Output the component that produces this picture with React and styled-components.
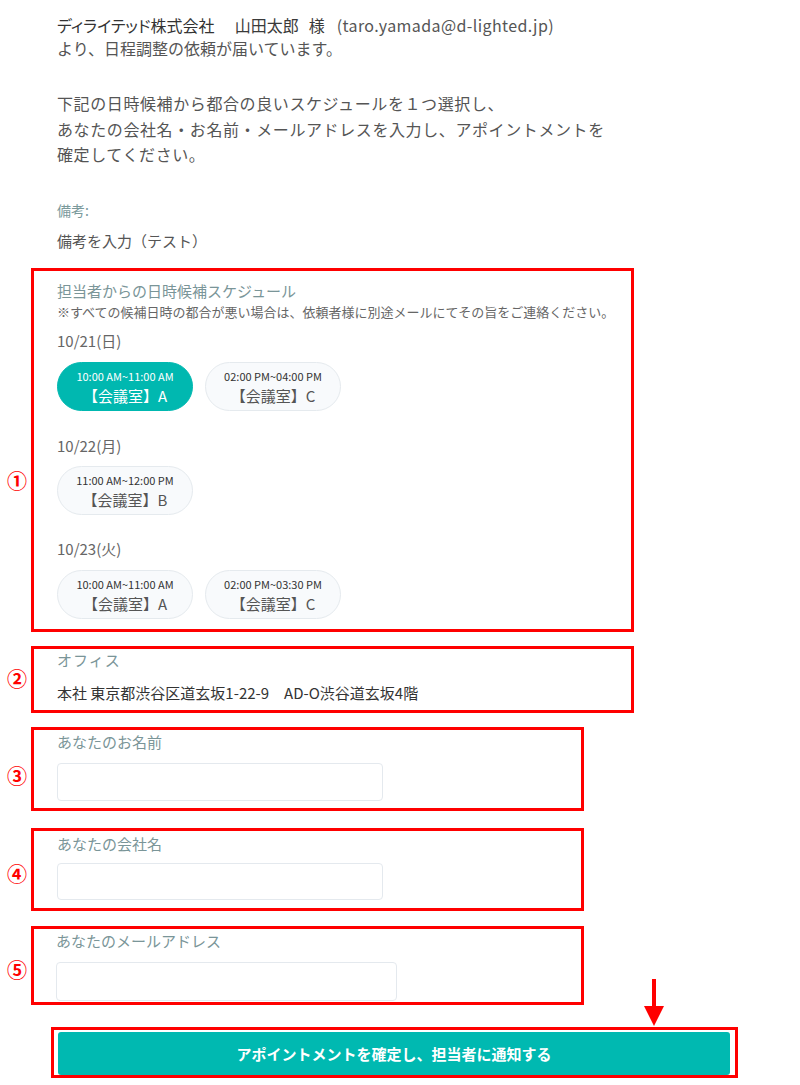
import React from "react";
import styled, { createGlobalStyle } from "styled-components";

const GlobalStyle = createGlobalStyle`
  html, body { margin: 0; padding: 0; background: #fff; }
  body { font-family: "Noto Sans CJK JP", "Noto Sans", sans-serif; color: #555; }
  * { box-sizing: border-box; }
`;

const Page = styled.div`
  width: 800px;
  padding: 14px 0 0 31px;
`;

const Intro = styled.div`
  padding-left: 26px;
  font-size: 16px;
  line-height: 23px;
  color: #555;
`;

const Line = styled.p`
  margin: 0;
`;

const Company = styled.span`
  color: #333;
  font-feature-settings: "palt";
`;

const Person = styled.span`
  color: #3a3a3a;
  margin-left: 4px;
`;

const Honorific = styled.span`
  margin: 0 12px 0 10px;
  color: #3a3a3a;
`;

const Email = styled.span`
  letter-spacing: 0.4px;
`;

const Instructions = styled.p`
  margin: 31px 0 0;
  padding-left: 26px;
  font-size: 16px;
  line-height: 25.5px;
  letter-spacing: 0.6px;
  color: #555;
`;

const NoteLabel = styled.div`
  margin-top: 32px;
  padding-left: 26px;
  font-size: 14px;
  line-height: 20px;
  color: #7a999b;
`;

const NoteText = styled.div`
  margin-top: 11px;
  padding-left: 26px;
  font-size: 15px;
  line-height: 20px;
  color: #555;
`;

const Callout = styled.section`
  position: relative;
  width: ${(p) => p.$w}px;
  margin-top: ${(p) => p.$mt}px;
  padding: ${(p) => p.$pt}px 23px ${(p) => p.$pb}px ${(p) => p.$pl || 23}px;
  border: 3px solid #ff0000;
`;

const Badge = styled.span`
  position: absolute;
  left: -30px;
  top: ${(p) => p.$top}px;
  width: 26px;
  text-align: center;
  font-size: 20px;
  line-height: 24px;
  font-weight: 700;
  color: #ff0000;
`;

const SectionTitle = styled.div`
  font-size: 15px;
  line-height: 20px;
  color: #7a9598;
  letter-spacing: ${(p) => p.$ls || 0}px;
`;

const Notice = styled.div`
  margin-top: 2px;
  font-size: 13px;
  line-height: 18px;
  color: #666;
  white-space: nowrap;
`;

const DayDate = styled.div`
  margin-top: ${(p) => p.$mt}px;
  font-size: 15px;
  line-height: 20px;
  color: #666;
`;

const SlotRow = styled.div`
  display: flex;
  gap: 12px;
  margin-top: ${(p) => p.$mt}px;
`;

const Slot = styled.button`
  width: 136px;
  height: 49px;
  border-radius: 25px;
  border: 1px solid ${(p) => (p.$active ? "#00b8b0" : "#e5eaee")};
  background: ${(p) => (p.$active ? "#00b8b0" : "#f8fafc")};
  display: flex;
  flex-direction: column;
  align-items: center;
  padding: 5px 0 0;
  font-family: inherit;
  cursor: pointer;
`;

const SlotTime = styled.span`
  font-size: 11px;
  line-height: 16px;
  color: ${(p) => (p.$active ? "#fff" : "#333")};
`;

const SlotRoom = styled.span`
  margin-top: 1px;
  font-size: 15px;
  line-height: 22px;
  color: ${(p) => (p.$active ? "#fff" : "#555")};
`;

const Address = styled.div`
  margin-top: 13px;
  font-size: 15px;
  line-height: 20px;
  color: #333;
`;

const TextInput = styled.input`
  display: block;
  margin-top: ${(p) => p.$mt}px;
  width: ${(p) => p.$w}px;
  height: ${(p) => p.$h}px;
  border: 1px solid #e4e9ee;
  border-radius: 4px;
  background: #fff;
  outline: none;
`;

const ButtonFrame = styled.div`
  position: relative;
  width: 687px;
  margin: 22px 0 0 20px;
  padding: 2px 5px 0 4px;
  border: 3px solid #ff0000;
`;

const SubmitButton = styled.button`
  display: block;
  width: 100%;
  height: 43px;
  border: none;
  border-radius: 3px;
  background: #00b9b1;
  color: #fff;
  font-family: inherit;
  font-size: 15px;
  font-weight: 700;
  cursor: pointer;
`;

const Arrow = styled.svg`
  position: absolute;
  left: 588px;
  top: -51px;
`;

const days = [
  {
    date: "10/21(日)",
    mt: 10,
    rowMt: 11,
    slots: [
      { time: "10:00 AM~11:00 AM", room: "【会議室】A", active: true },
      { time: "02:00 PM~04:00 PM", room: "【会議室】C" },
    ],
  },
  {
    date: "10/22(月)",
    mt: 25,
    rowMt: 10,
    slots: [{ time: "11:00 AM~12:00 PM", room: "【会議室】B" }],
  },
  {
    date: "10/23(火)",
    mt: 24,
    rowMt: 11,
    slots: [
      { time: "10:00 AM~11:00 AM", room: "【会議室】A" },
      { time: "02:00 PM~03:30 PM", room: "【会議室】C" },
    ],
  },
];

const fields = [
  { no: "③", label: "あなたのお名前", mt: 14, pt: 2, pb: 7, pl: 23, imt: 11, ih: 38, iw: 326, badge: 34 },
  { no: "④", label: "あなたの会社名", mt: 17, pt: 3, pb: 8, pl: 23, imt: 9, ih: 37, iw: 326, badge: 31 },
  { no: "⑤", label: "あなたのメールアドレス", mt: 15, pt: 2, pb: 1, pl: 22, imt: 11, ih: 39, iw: 341, badge: 29 },
];

export default function App() {
  return (
    <>
      <GlobalStyle />
      <Page>
        <Intro>
          <Line>
            <Company>ディライテッド株式会社</Company>
            <Person>　山田太郎</Person>
            <Honorific>様</Honorific>
            <Email>(taro.yamada@d-lighted.jp)</Email>
          </Line>
          <Line>より、日程調整の依頼が届いています。</Line>
        </Intro>
        <Instructions>
          下記の日時候補から都合の良いスケジュールを１つ選択し、
          <br />
          あなたの会社名・お名前・メールアドレスを入力し、アポイントメントを
          <br />
          確定してください。
        </Instructions>
        <NoteLabel>備考:</NoteLabel>
        <NoteText>備考を入力（テスト）</NoteText>

        <Callout $w={603} $mt={17} $pt={10} $pb={10}>
          <Badge $top={198}>①</Badge>
          <SectionTitle>担当者からの日時候補スケジュール</SectionTitle>
          <Notice>※すべての候補日時の都合が悪い場合は、依頼者様に別途メールにてその旨をご連絡ください。</Notice>
          {days.map((d) => (
            <div key={d.date}>
              <DayDate $mt={d.mt}>{d.date}</DayDate>
              <SlotRow $mt={d.rowMt}>
                {d.slots.map((s) => (
                  <Slot key={s.time + s.room} $active={s.active}>
                    <SlotTime $active={s.active}>{s.time}</SlotTime>
                    <SlotRoom $active={s.active}>{s.room}</SlotRoom>
                  </Slot>
                ))}
              </SlotRow>
            </div>
          ))}
        </Callout>

        <Callout $w={603} $mt={14} $pt={1} $pb={7}>
          <Badge $top={18}>②</Badge>
          <SectionTitle $ls={1}>オフィス</SectionTitle>
          <Address>本社 東京都渋谷区道玄坂1-22-9　AD-O渋谷道玄坂4階</Address>
        </Callout>

        {fields.map((f) => (
          <Callout key={f.no} $w={553} $mt={f.mt} $pt={f.pt} $pb={f.pb} $pl={f.pl}>
            <Badge $top={f.badge}>{f.no}</Badge>
            <SectionTitle>{f.label}</SectionTitle>
            <TextInput $mt={f.imt} $h={f.ih} $w={f.iw} />
          </Callout>
        ))}

        <ButtonFrame>
          <Arrow width="24" height="48" viewBox="0 0 24 48">
            <rect x="10" y="0" width="4" height="28" fill="#ff0000" />
            <polygon points="2,27 22,27 12,47" fill="#ff0000" />
          </Arrow>
          <SubmitButton>アポイントメントを確定し、担当者に通知する</SubmitButton>
        </ButtonFrame>
      </Page>
    </>
  );
}
